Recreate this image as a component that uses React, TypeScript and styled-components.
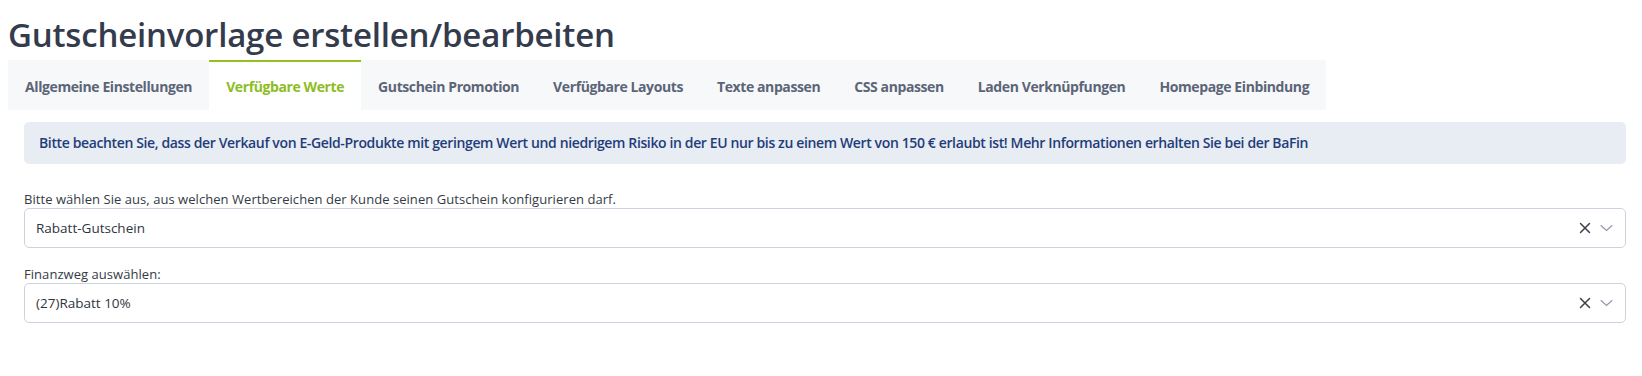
import styled, { createGlobalStyle } from 'styled-components'

const GlobalStyle = createGlobalStyle`
  body {
    margin: 8px;
    background: #ffffff;
    font-family: "Open Sans", "Noto Sans", "Liberation Sans", sans-serif;
    color: #333a45;
  }
`

const Page = styled.div`
  display: flex;
  flex-direction: column;
`

const Title = styled.h1`
  margin: 6px 0 4px;
  font-size: 33px;
  line-height: 42px;
  font-weight: 600;
  color: #333b4c;
  letter-spacing: -0.2px;
`

const TabBar = styled.nav`
  display: flex;
  align-self: flex-start;
  background: #f7f8fa;
  height: 50px;
`

const Tab = styled.div<{ $active?: boolean }>`
  display: flex;
  align-items: center;
  padding: 0 17px;
  font-size: 14px;
  font-weight: 700;
  letter-spacing: -0.4px;
  color: ${p => (p.$active ? '#8cbd23' : '#5b6577')};
  background: ${p => (p.$active ? '#ffffff' : 'transparent')};
  border-top: 2px solid ${p => (p.$active ? '#93c11f' : 'transparent')};
  cursor: pointer;
`

const Panel = styled.section`
  display: flex;
  flex-direction: column;
  padding: 12px 8px 12px 16px;
`

const Alert = styled.div`
  background: #e8ecf3;
  border-radius: 5px;
  padding: 12px 15px;
  font-size: 14px;
  line-height: 18px;
  font-weight: 600;
  letter-spacing: -0.37px;
  color: #1f3d7a;
`

const Field = styled.div<{ $first?: boolean }>`
  display: flex;
  flex-direction: column;
  margin-top: ${p => (p.$first ? '27px' : '18px')};
`

const Label = styled.label`
  font-size: 13px;
  line-height: 17px;
  letter-spacing: 0.05px;
  color: #343a45;
`

const Select = styled.div`
  display: flex;
  align-items: center;
  height: 40px;
  box-sizing: border-box;
  border: 1px solid #cdd3de;
  border-radius: 5px;
  padding: 0 12px 0 11px;
  font-size: 13.5px;
  color: #2f3540;
`

const Value = styled.span`
  flex: 1;
`

const Controls = styled.div`
  display: flex;
  align-items: center;
  gap: 9px;
`

const IconButton = styled.span`
  display: flex;
  align-items: center;
`

const ClearIcon = () => (
  <svg width="12" height="12" viewBox="0 0 12 12">
    <path d="M1.5 1.5 L10.5 10.5 M10.5 1.5 L1.5 10.5" stroke="#3a3f4a" strokeWidth="1.5" strokeLinecap="round" />
  </svg>
)

const ChevronIcon = () => (
  <svg width="13" height="8" viewBox="0 0 13 8">
    <path d="M1 1.5 L6.5 6.5 L12 1.5" stroke="#8e97a8" strokeWidth="1.1" fill="none" strokeLinecap="round" />
  </svg>
)

const tabs = [
  'Allgemeine Einstellungen',
  'Verfügbare Werte',
  'Gutschein Promotion',
  'Verfügbare Layouts',
  'Texte anpassen',
  'CSS anpassen',
  'Laden Verknüpfungen',
  'Homepage Einbindung',
]

const SelectBox = ({ value }: { value: string }) => (
  <Select>
    <Value>{value}</Value>
    <Controls>
      <IconButton><ClearIcon /></IconButton>
      <IconButton><ChevronIcon /></IconButton>
    </Controls>
  </Select>
)

export default function App() {
  return (
    <Page>
      <GlobalStyle />
      <Title>Gutscheinvorlage erstellen/bearbeiten</Title>
      <TabBar>
        {tabs.map(t => (
          <Tab key={t} $active={t === 'Verfügbare Werte'}>{t}</Tab>
        ))}
      </TabBar>
      <Panel>
        <Alert>
          Bitte beachten Sie, dass der Verkauf von E-Geld-Produkte mit geringem Wert und niedrigem Risiko in der EU nur bis zu einem Wert von 150 € erlaubt ist! Mehr Informationen erhalten Sie bei der BaFin
        </Alert>
        <Field $first>
          <Label>Bitte wählen Sie aus, aus welchen Wertbereichen der Kunde seinen Gutschein konfigurieren darf.</Label>
          <SelectBox value="Rabatt-Gutschein" />
        </Field>
        <Field>
          <Label>Finanzweg auswählen:</Label>
          <SelectBox value="(27)Rabatt 10%" />
        </Field>
      </Panel>
    </Page>
  )
}
